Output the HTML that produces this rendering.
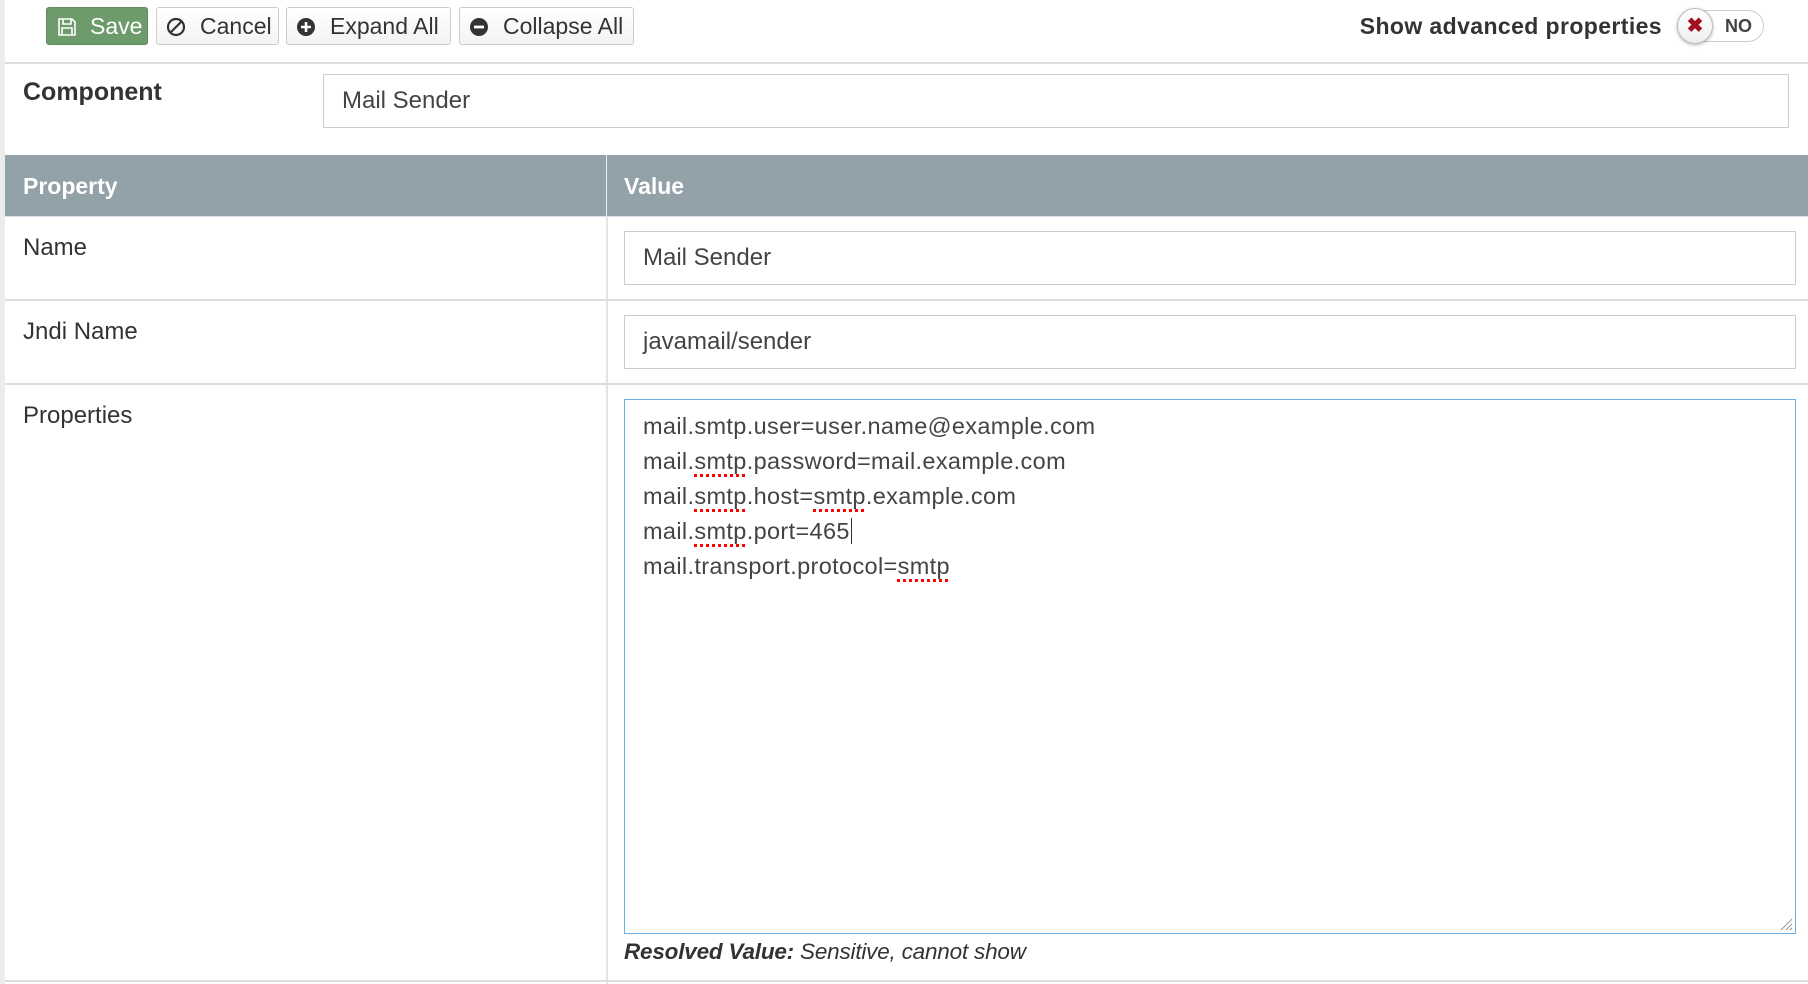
<!DOCTYPE html>
<html><head><meta charset="utf-8"><style>
*{box-sizing:border-box;margin:0;padding:0}
body{width:1808px;height:984px;background:#fff;font-family:"Liberation Sans",sans-serif;color:#333;position:relative;overflow:hidden}
.abs{position:absolute}
.strip{left:0;top:0;width:5px;height:984px;background:#ececec}
.btn{position:absolute;top:7px;height:38px;border:1px solid #ccc;border-radius:3px;background:linear-gradient(#fff,#f3f3f3);font-size:23px;line-height:36px;color:#333;padding-left:10px;white-space:nowrap}
.btn svg{position:absolute;top:9px}
.btn span{position:absolute}
.save{background:#6d9b6b;border-color:#5f8b5d;color:#fff}
.line{background:#ddd;height:2px}
.inp{position:absolute;border:1px solid #ccc;background:#fff;font-size:24px;color:#444;padding-left:18px;display:flex;align-items:center}
.lbl{position:absolute;font-size:23px;color:#333}
.ta div{height:35px;line-height:35px;white-space:nowrap}
.sq{text-decoration:underline dotted red;text-decoration-thickness:3px;text-underline-offset:5px}
</style></head><body>
<div class="abs strip"></div>

<div class="btn save" style="left:46px;width:102px"><svg width="20" height="20" viewBox="0 0 20 20" style="left:10px"><path d="M2 2h13l3 3v13H2z M6 2v5h8V2 M5 11h10v7H5z" fill="none" stroke="#fff" stroke-width="1.6"/></svg><span style="left:43px">Save</span></div>
<div class="btn" style="left:156px;width:123px"><svg width="20" height="20" viewBox="0 0 20 20" style="left:9px"><circle cx="10" cy="10" r="8" fill="none" stroke="#333" stroke-width="2.2"/><path d="M5 15L15 5" stroke="#333" stroke-width="2.2"/></svg><span style="left:43px">Cancel</span></div>
<div class="btn" style="left:286px;width:165px"><svg width="20" height="20" viewBox="0 0 20 20" style="left:9px"><circle cx="10" cy="10" r="9" fill="#333"/><path d="M10 5v10M5 10h10" stroke="#fff" stroke-width="2.6"/></svg><span style="left:43px">Expand All</span></div>
<div class="btn" style="left:459px;width:175px"><svg width="20" height="20" viewBox="0 0 20 20" style="left:9px"><circle cx="10" cy="10" r="9" fill="#333"/><path d="M5 10h10" stroke="#fff" stroke-width="2.8"/></svg><span style="left:43px">Collapse All</span></div>

<div class="abs" style="right:146px;top:10px;font-size:23px;font-weight:bold;color:#333;line-height:32px;letter-spacing:0.4px">Show advanced properties</div>
<div class="abs" style="left:1678px;top:10px;width:86px;height:32px;border:1px solid #ccc;border-radius:16px;background:#fff"></div>
<div class="abs" style="left:1677px;top:8px;width:36px;height:36px;border-radius:18px;background:linear-gradient(#fff,#eee);border:1px solid #bbb;box-shadow:0 1px 3px rgba(0,0,0,.3);color:#a01020;font-size:20px;font-weight:bold;text-align:center;line-height:34px">✖</div>
<div class="abs" style="left:1725px;top:12px;font-size:18px;font-weight:bold;color:#444;line-height:28px">NO</div>

<div class="abs line" style="left:5px;top:62px;width:1803px"></div>

<div class="lbl" style="left:23px;top:76px;font-size:25px;font-weight:bold;line-height:32px">Component</div>
<div class="inp" style="left:323px;top:74px;width:1466px;height:54px">Mail Sender</div>

<div class="abs" style="left:5px;top:155px;width:1803px;height:61px;background:#93a1a8"></div>
<div class="abs" style="left:23px;top:170px;font-size:23px;font-weight:bold;color:#fff;line-height:32px">Property</div>
<div class="abs" style="left:606px;top:155px;width:1px;height:61px;background:#eef1f2"></div>
<div class="abs" style="left:624px;top:170px;font-size:23px;font-weight:bold;color:#fff;line-height:32px">Value</div>
<div class="abs" style="left:5px;top:216px;width:1803px;height:1px;background:#dde"></div>

<div class="abs" style="left:606px;top:216px;width:2px;height:768px;background:#e4e4e4"></div>
<div class="abs line" style="left:5px;top:299px;width:1803px"></div>
<div class="abs line" style="left:5px;top:383px;width:1803px"></div>
<div class="abs line" style="left:5px;top:980px;width:1803px"></div>

<div class="lbl" style="left:23px;top:232px;font-size:24px;line-height:32px">Name</div>
<div class="lbl" style="left:23px;top:316px;font-size:24px;line-height:32px">Jndi Name</div>
<div class="lbl" style="left:23px;top:400px;font-size:24px;line-height:32px">Properties</div>

<div class="inp" style="left:624px;top:231px;width:1172px;height:54px">Mail Sender</div>
<div class="inp" style="left:624px;top:315px;width:1172px;height:54px">javamail/sender</div>

<div class="abs ta" style="left:624px;top:399px;width:1172px;height:535px;border:1px solid #66afe9;padding:9px 0 0 18px;font-size:23.5px;color:#444;letter-spacing:0.35px">
<div>mail.smtp.user=user.name@example.com</div>
<div>mail.<span class="sq">smtp</span>.password=mail.example.com</div>
<div>mail.<span class="sq">smtp</span>.host=<span class="sq">smtp</span>.example.com</div>
<div>mail.<span class="sq">smtp</span>.port=465<span style="border-left:1px solid #333;margin-left:1px"></span></div>
<div>mail.transport.protocol=<span class="sq">smtp</span></div>
<svg class="abs" style="right:2px;bottom:2px" width="14" height="14"><path d="M2 13L13 2M7 13L13 7M11 13L13 11" stroke="#999" stroke-width="1"/></svg>
</div>

<div class="abs" style="left:624px;top:936px;font-size:22.5px;font-style:italic;color:#333;line-height:32px;letter-spacing:-0.2px"><b>Resolved Value:</b> Sensitive, cannot show</div>
</body></html>
